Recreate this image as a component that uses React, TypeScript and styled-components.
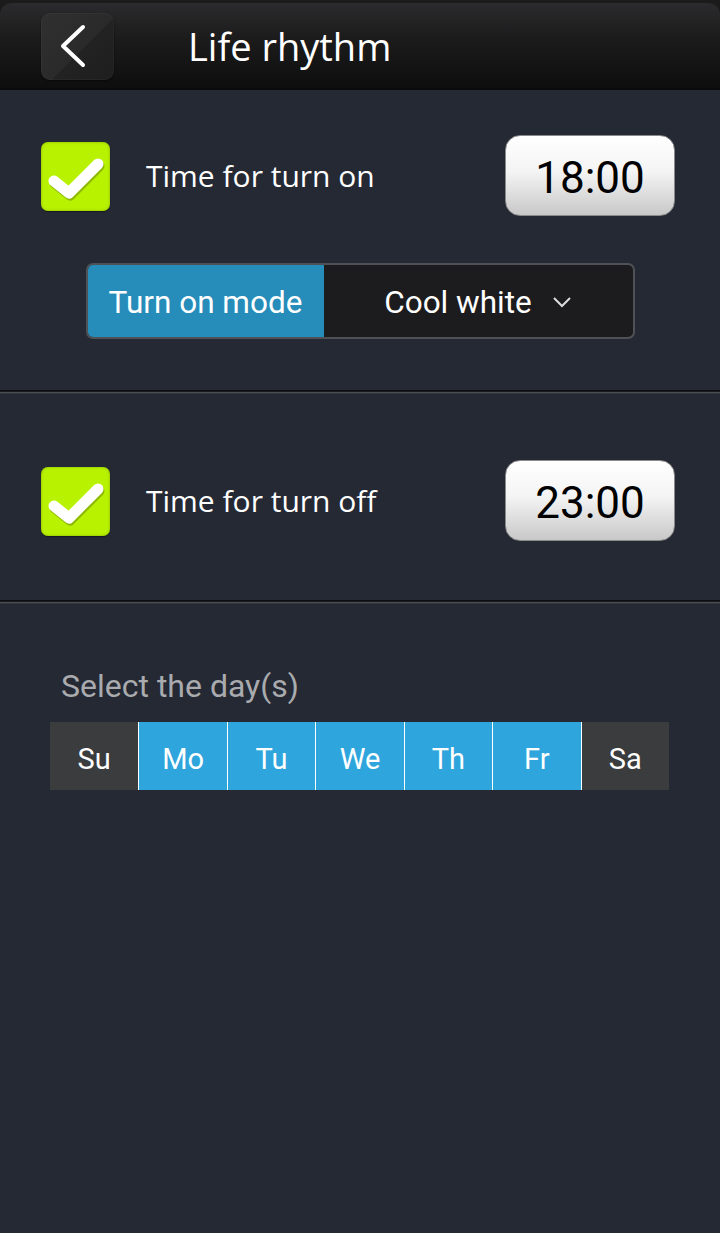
import * as React from 'react';
import styled, { createGlobalStyle } from 'styled-components';

const days = [
	{ label: 'Su', on: false },
	{ label: 'Mo', on: true },
	{ label: 'Tu', on: true },
	{ label: 'We', on: true },
	{ label: 'Th', on: true },
	{ label: 'Fr', on: true },
	{ label: 'Sa', on: false },
];

const CheckIcon = () => (
	<svg width="58" height="46" viewBox="0 0 58 46">
		<path
			d="M7 26 L22 38 L51 9"
			fill="none"
			stroke="rgba(60,80,0,0.35)"
			strokeWidth="11"
			strokeLinecap="round"
			strokeLinejoin="round"
			transform="translate(1,2)"
		/>
		<path
			d="M7 26 L22 38 L51 9"
			fill="none"
			stroke="#fff"
			strokeWidth="11"
			strokeLinecap="round"
			strokeLinejoin="round"
		/>
	</svg>
);

const App = () => {
	return (
		<Root>
			<GlobalStyle />
			<Header>
				<HeaderBar>
					<BackButton>
						<svg width="30" height="44" viewBox="0 0 30 44">
							<path
								d="M25 3 L5 22 L25 41"
								fill="none"
								stroke="#fff"
								strokeWidth="4"
								strokeLinecap="round"
								strokeLinejoin="round"
							/>
						</svg>
					</BackButton>
					<Title>Life rhythm</Title>
				</HeaderBar>
			</Header>

			<Section $height={300} $top={45}>
				<Row>
					<Check>
						<CheckIcon />
					</Check>
					<Label>Time for turn on</Label>
					<TimeButton>18:00</TimeButton>
				</Row>
				<ModeBox>
					<ModeLabel>Turn on mode</ModeLabel>
					<ModeValue>
						Cool white
						<svg width="20" height="12" viewBox="0 0 20 12">
							<path d="M2 2 L10 10 L18 2" fill="none" stroke="#ddd" strokeWidth="2" />
						</svg>
					</ModeValue>
				</ModeBox>
			</Section>
			<Divider />
			<Section $height={206} $top={66}>
				<Row>
					<Check>
						<CheckIcon />
					</Check>
					<Label>Time for turn off</Label>
					<TimeButton>23:00</TimeButton>
				</Row>
			</Section>
			<Divider />
			<DaysArea>
				<DaysTitle>Select the day(s)</DaysTitle>
				<DaysRow>
					{days.map(d => (
						<Day key={d.label} $on={d.on}>
							{d.label}
						</Day>
					))}
				</DaysRow>
			</DaysArea>
		</Root>
	);
};

export default App;

const bodyBg = '#252934';
const uiFont = "'Open Sans', 'Noto Sans', sans-serif";
const rFont = "Roboto, 'Liberation Sans', sans-serif";

const GlobalStyle = createGlobalStyle`
	html, body {
		margin: 0;
		padding: 0;
		background: ${bodyBg};
	}
`;

const Root = styled.div`
	width: 720px;
	min-height: 1233px;
	background: ${bodyBg};
	display: flex;
	flex-direction: column;
`;

const Header = styled.div`
	background: #1b1b1b;
	padding-top: 3px;
	box-sizing: border-box;
	border-bottom: 2px solid #0a0a0c;
	height: 90px;
`;

const HeaderBar = styled.div`
	height: 85px;
	border-radius: 12px 12px 0 0;
	background: linear-gradient(#2b2b2d, #1c1c1d 40%, #0e0e0e);
	display: flex;
	align-items: center;
	padding-left: 41px;
	box-sizing: border-box;
`;

const BackButton = styled.div`
	width: 73px;
	height: 67px;
	margin-top: 1px;
	border-radius: 9px;
	background: linear-gradient(135deg, #303031 0%, #2a2a2b 55%, #222223 56%, #1e1e1f 100%);
	box-shadow: inset 0 0 0 1px rgba(255, 255, 255, 0.03), 0 1px 2px rgba(0, 0, 0, 0.6);
	display: flex;
	align-items: center;
	justify-content: center;
	padding-right: 10px;
	box-sizing: border-box;
`;

const Title = styled.div`
	margin-left: 74px;
	font-family: ${uiFont};
	font-size: 38px;
	color: #fff;
`;

const Section = styled.div<{ $height: number; $top: number }>`
	height: ${p => p.$height}px;
	display: flex;
	flex-direction: column;
	align-items: center;
	padding-top: ${p => p.$top}px;
	box-sizing: border-box;
	gap: 47px;
`;

const Row = styled.div`
	width: 100%;
	display: flex;
	align-items: center;
	padding: 0 45px 0 41px;
	box-sizing: border-box;
`;

const Check = styled.div`
	width: 69px;
	height: 69px;
	margin-top: 2px;
	border-radius: 7px;
	background: #b9f200;
	box-shadow: inset 0 0 3px rgba(120, 160, 0, 0.8), 0 1px 1px rgba(0, 0, 0, 0.4);
	display: flex;
	align-items: center;
	justify-content: center;
	padding-top: 2px;
	box-sizing: border-box;
`;

const Label = styled.div`
	flex: 1;
	margin-left: 36px;
	font-family: ${uiFont};
	font-size: 30px;
	color: #fff;
`;

const TimeButton = styled.div`
	width: 170px;
	height: 81px;
	border-radius: 15px;
	background: linear-gradient(#ffffff, #f4f4f4 45%, #c8c8c8);
	border: 1px solid #8a8a8a;
	box-sizing: border-box;
	display: flex;
	align-items: center;
	justify-content: center;
	padding-top: 5px;
	font-family: ${rFont};
	font-size: 44px;
	color: #000;
`;

const ModeBox = styled.div`
	width: 549px;
	height: 76px;
	border: 2px solid #4e5256;
	border-radius: 7px;
	background: #1c1c1e;
	display: flex;
	overflow: hidden;
	box-sizing: border-box;
`;

const ModeLabel = styled.div`
	width: 236px;
	background: #268cba;
	display: flex;
	align-items: center;
	justify-content: center;
	padding-top: 2px;
	font-family: ${rFont};
	font-size: 31.5px;
	color: #fff;
`;

const ModeValue = styled.div`
	flex: 1;
	display: flex;
	align-items: center;
	justify-content: center;
	gap: 20px;
	padding-top: 2px;
	font-family: ${rFont};
	font-size: 31.5px;
	color: #fff;
`;

const Divider = styled.div`
	height: 4px;
	background: linear-gradient(#0c0d10 0 1px, #1a1b1e 1px 2px, #4a4d52 2px 3px, #33363c 3px);
`;

const DaysArea = styled.div`
	padding: 64px 51px 0 50px;
	display: flex;
	flex-direction: column;
`;

const DaysTitle = styled.div`
	font-family: ${rFont};
	font-size: 32px;
	color: #a9abae;
	padding-left: 11px;
	height: 36px;
	line-height: 36px;
`;

const DaysRow = styled.div`
	margin-top: 18px;
	display: grid;
	grid-template-columns: repeat(7, 1fr);
	height: 68px;
`;

const Day = styled.div<{ $on: boolean }>`
	background: ${p => (p.$on ? '#2ea5dc' : '#3a3c3e')};
	display: flex;
	align-items: center;
	justify-content: center;
	padding-top: 5px;
	box-sizing: border-box;
	font-family: ${rFont};
	font-size: 29px;
	color: #fff;
	& + & {
		border-left: 1px solid #ffffff;
	}
`;
